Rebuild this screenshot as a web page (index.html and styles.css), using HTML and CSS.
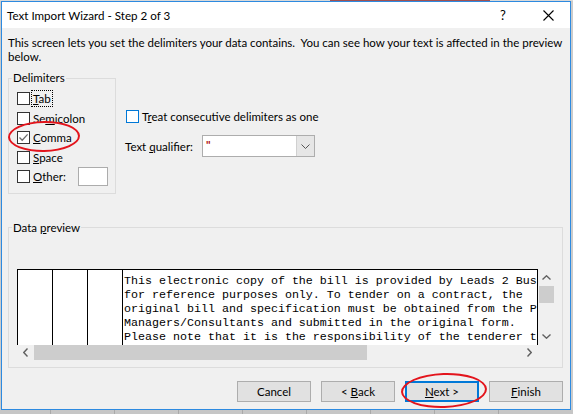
FILE: index.html
```html
<!DOCTYPE html>
<html lang="en">
<head>
    <title>Text Import Wizard - Step 2 of 3</title>
    <link rel="stylesheet" href="styles.css">
</head>
<body>
    <div class="sheet-top"></div>
    <div class="wizard">
        <div class="title-bar">
            <span class="title">Text Import Wizard - Step 2 of 3</span>
            <span class="help">?</span>
            <span class="close">
                <svg width="11" height="11" viewBox="0 0 11 11"><path d="M0.5 0.5 L10.5 10.5 M10.5 0.5 L0.5 10.5" stroke="#000" stroke-width="1.1" fill="none"/></svg>
            </span>
        </div>
        <div class="wizard-body">
            <p class="intro">This screen lets you set the delimiters your data contains.&nbsp; You can see how your text is affected in the preview<br>below.</p>

            <div class="options">
                <fieldset class="group delimiters">
                    <legend>Delimiters</legend>
                    <div class="delim-list">
                        <label class="check"><span class="box"></span><span class="focus"><u>T</u>ab</span></label>
                        <label class="check"><span class="box"></span><span>Se<u>m</u>icolon</span></label>
                        <label class="check ringed">
                            <span class="box">
                                <svg width="11" height="11" viewBox="0 0 11 11"><path d="M1.5 5.5 L4.2 8.3 L9.6 2.4" stroke="#6d6d6d" stroke-width="1.3" fill="none"/></svg>
                            </span>
                            <span><u>C</u>omma</span>
                            <span class="ring ring-comma"></span>
                        </label>
                        <label class="check"><span class="box"></span><span><u>S</u>pace</span></label>
                        <label class="check"><span class="box"></span><span><u>O</u>ther:</span><span class="other-input"></span></label>
                    </div>
                </fieldset>

                <div class="more-options">
                    <label class="check treat"><span class="box blue"></span><span>T<u>r</u>eat consecutive delimiters as one</span></label>
                    <div class="qualifier">
                        <span class="qualifier-label">Text <u>q</u>ualifier:</span>
                        <div class="combo">
                            <span class="combo-value">"</span>
                            <span class="combo-btn">
                                <svg width="9" height="5" viewBox="0 0 9 5"><path d="M0.5 0.5 L4.5 4.5 L8.5 0.5" stroke="#555" stroke-width="1" fill="none"/></svg>
                            </span>
                        </div>
                    </div>
                </div>
            </div>

            <fieldset class="group preview">
                <legend>Data <u>p</u>review</legend>
                <div class="preview-frame">
                    <div class="preview-table">
                        <div class="col"></div>
                        <div class="col"></div>
                        <div class="col"></div>
<pre class="preview-text">This electronic copy of the bill is provided by Leads 2 Business
for reference purposes only. To tender on a contract, the
original bill and specification must be obtained from the Project
Managers/Consultants and submitted in the original form.
Please note that it is the responsibility of the tenderer to</pre>
                    </div>
                    <div class="vscroll">
                        <span class="arrow">
                            <svg width="9" height="5" viewBox="0 0 9 5"><path d="M0.5 4.5 L4.5 0.8 L8.5 4.5" stroke="#606060" stroke-width="1.4" fill="none"/></svg>
                        </span>
                        <span class="vthumb"></span>
                        <span class="fill"></span>
                        <span class="arrow">
                            <svg width="9" height="5" viewBox="0 0 9 5"><path d="M0.5 0.5 L4.5 4.2 L8.5 0.5" stroke="#606060" stroke-width="1.4" fill="none"/></svg>
                        </span>
                    </div>
                    <div class="hscroll">
                        <span class="arrow">
                            <svg width="5" height="9" viewBox="0 0 5 9"><path d="M4.5 0.5 L0.8 4.5 L4.5 8.5" stroke="#606060" stroke-width="1.4" fill="none"/></svg>
                        </span>
                        <span class="hthumb"></span>
                        <span class="fill"></span>
                        <span class="arrow">
                            <svg width="5" height="9" viewBox="0 0 5 9"><path d="M0.5 0.5 L4.2 4.5 L0.5 8.5" stroke="#606060" stroke-width="1.4" fill="none"/></svg>
                        </span>
                    </div>
                    <div class="corner"></div>
                </div>
            </fieldset>

            <div class="buttons">
                <button class="btn"><span>Cancel</span></button>
                <button class="btn"><span>&lt; <u>B</u>ack</span></button>
                <button class="btn default"><span><u>N</u>ext &gt;</span><span class="ring ring-next"></span></button>
                <button class="btn"><span><u>F</u>inish</span></button>
            </div>
        </div>
    </div>
    <div class="sheet-bottom"></div>
</body>
</html>
```

FILE: styles.css
```css
body {
    margin: 0;
    height: 414px;
    overflow: hidden;
    background-color: #cbcbcb;
    font-family: Lato, "Liberation Sans", sans-serif;
    font-size: 11.5px;
    color: #000;
}

.sheet-top {
    height: 1px;
    background: linear-gradient(to right, #d9d9d9 0 330px, #a05050 330px 490px, #d9d9d9 490px);
}

.wizard {
    margin-left: 1px;
    width: 568px;
    border: 1px solid #2d8ae0;
    background-color: #f0f0f0;
}

.title-bar {
    display: flex;
    align-items: center;
    height: 26px;
    padding-left: 5px;
    background-color: #fff;
}
.title {
    flex: 1;
    font-size: 11.6px;
}
.help {
    width: 10px;
    margin-right: 35px;
    text-align: center;
    font-size: 13px;
}
.close {
    display: flex;
    margin-right: 16px;
}

.wizard-body {
    padding: 8px 7px 7px 6px;
}

.intro {
    margin: 0;
    line-height: 14px;
    white-space: nowrap;
}

.options {
    display: flex;
    align-items: flex-start;
    margin-top: 7px;
}

.group {
    margin: 0;
    min-width: 0;
    border: 1px solid #dcdcdc;
    padding: 0 0 6px 8px;
    box-sizing: border-box;
}
.group legend {
    padding: 0 1px;
    margin-left: -5px;
    line-height: 14px;
}

.delimiters {
    width: 108px;
}
.delim-list {
    padding-top: 4px;
}

.check {
    display: flex;
    align-items: center;
    gap: 3px;
    height: 19.5px;
}
.ringed {
    position: relative;
}
.box {
    display: flex;
    align-items: center;
    justify-content: center;
    flex: none;
    width: 13px;
    height: 13px;
    box-sizing: border-box;
    border: 1px solid #333;
    background-color: #fff;
}
.box.blue {
    border-color: #0078d7;
}
.focus {
    outline: 1px dotted #000;
    outline-offset: 1px;
}
.other-input {
    width: 30px;
    height: 19px;
    box-sizing: border-box;
    margin-left: auto;
    margin-right: 7px;
    border: 1px solid #acacac;
    background-color: #fff;
}

.ring {
    position: absolute;
    border: 2px solid #e3141c;
    border-radius: 50%;
    pointer-events: none;
}
.ring-comma {
    left: -9px;
    top: -7px;
    width: 68px;
    height: 27px;
    transform: rotate(-1deg);
}
.ring-next {
    left: -6px;
    top: -10px;
    width: 82px;
    height: 31px;
    transform: rotate(-2deg);
}

.more-options {
    margin-left: 10px;
    padding-top: 38px;
}
.treat {
    height: 14px;
}
.qualifier {
    display: flex;
    align-items: center;
    margin-top: 12px;
    margin-left: -1px;
}
.qualifier-label {
    width: 77px;
}
.combo {
    display: flex;
    width: 113px;
    height: 22px;
    box-sizing: border-box;
    border: 1px solid #adadad;
    background-color: #fff;
}
.combo-value {
    flex: 1;
    padding-left: 3px;
    line-height: 18px;
    color: #b01010;
    font-weight: bold;
}
.combo-btn {
    display: flex;
    align-items: center;
    justify-content: center;
    width: 17px;
    border-left: 1px solid #d0d0d0;
    background-color: #e6e6e6;
}

.preview {
    margin-top: 27px;
    padding: 34px 7px 6px 8px;
}

.preview-frame {
    display: grid;
    grid-template-columns: 521px 17px;
    grid-template-rows: 76px 16px;
}
.preview-table {
    display: flex;
    overflow: hidden;
    border: 1px solid #000;
    border-bottom: 0;
    background-color: #fff;
}
.col {
    flex: none;
    width: 35px;
    box-sizing: border-box;
    border-right: 1px solid #000;
}
.preview-text {
    margin: 0;
    padding: 4px 0 0 1px;
    font-family: "Liberation Mono", monospace;
    font-size: 11.67px;
    line-height: 14px;
    white-space: pre;
}

.vscroll {
    display: flex;
    flex-direction: column;
    align-items: center;
    background-color: #f0f0f0;
}
.vscroll .arrow {
    display: flex;
    align-items: center;
    justify-content: center;
    width: 17px;
    height: 17px;
}
.vthumb {
    width: 15px;
    height: 17px;
    background-color: #cdcdcd;
}
.fill {
    flex: 1;
}

.hscroll {
    display: flex;
    align-items: center;
    background-color: #f0f0f0;
}
.hscroll .arrow {
    display: flex;
    align-items: center;
    justify-content: center;
    width: 17px;
    height: 16px;
}
.hthumb {
    width: 333px;
    height: 15px;
    background-color: #cdcdcd;
}
.corner {
    background-color: #f0f0f0;
}

.buttons {
    display: flex;
    justify-content: flex-end;
    gap: 10px;
    margin-top: 13px;
}
.btn {
    position: relative;
    display: flex;
    align-items: center;
    justify-content: center;
    width: 74px;
    height: 21px;
    padding: 0;
    box-sizing: border-box;
    border: 1px solid #adadad;
    background-color: #e1e1e1;
    font-family: inherit;
    font-size: 11.5px;
    color: #000;
}
.btn.default {
    border: 2px solid #0078d7;
}

.sheet-bottom {
    height: 4px;
    background: repeating-linear-gradient(to right, #c6c6c6 0 63px, #a9a9a9 63px 64px);
    background-position: -13px 0;
}
```
